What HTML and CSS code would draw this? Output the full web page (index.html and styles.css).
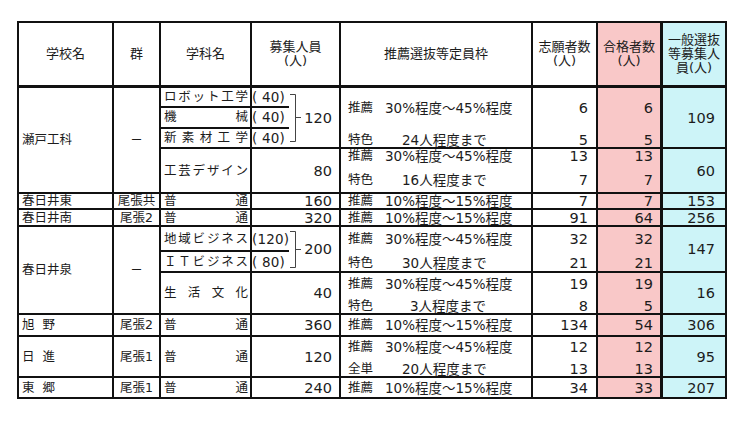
FILE: index.html
```html
<!DOCTYPE html>
<html lang="ja">
<head>
<meta charset="utf-8">
<title>推薦選抜等 合格者数</title>
<link rel="stylesheet" href="styles.css">
</head>
<body>
<div class="sheet">
  <div class="grid">
    <!-- header -->
    <div class="cell hd">学校名</div>
    <div class="cell hd">群</div>
    <div class="cell hd">学科名</div>
    <div class="cell hd">募集人員<br>(人)</div>
    <div class="cell hd">推薦選抜等定員枠</div>
    <div class="cell hd">志願者数<br>(人)</div>
    <div class="cell hd pink">合格者数<br>(人)</div>
    <div class="cell hd blue">一般選抜<br>等募集人<br>員(人)</div>

    <!-- 瀬戸工科 A -->
    <div class="cell school span2">瀬戸工科</div>
    <div class="cell grp span2">－</div>
    <div class="cell dept nopad">
      <div class="stack">
        <div class="sub ul"><span class="nm">ロボット工学</span></div>
        <div class="sub ul thick"><span class="nm">機械</span></div>
        <div class="sub"><span class="nm">新素材工学</span></div>
      </div>
    </div>
    <div class="cell capb">
      <div class="stack paren">
        <div class="sub ul">( 40)</div>
        <div class="sub ul thick">( 40)</div>
        <div class="sub">( 40)</div>
      </div>
      <svg class="brk" width="14" height="59" viewBox="0 0 14 59"><path d="M1 6.5H6.5V53.5H1M6.5 29.5H12" fill="none" stroke="#444" stroke-width="1"/></svg>
      <div class="tot">120</div>
    </div>
    <div class="cell sel two rA">
      <div class="ln"><span class="lb">推薦</span><span>30%程度～45%程度</span></div>
      <div class="ln"><span class="lb">特色</span><span class="t2">24人程度まで</span></div>
    </div>
    <div class="cell num two rA"><span>6</span><span>5</span></div>
    <div class="cell num two rA pink"><span>6</span><span>5</span></div>
    <div class="cell num blue gen">109</div>

    <!-- 瀬戸工科 B -->
    <div class="cell dept"><span class="nm">工芸デザイン</span></div>
    <div class="cell num cap">80</div>
    <div class="cell sel two rB">
      <div class="ln"><span class="lb">推薦</span><span>30%程度～45%程度</span></div>
      <div class="ln"><span class="lb">特色</span><span class="t2">16人程度まで</span></div>
    </div>
    <div class="cell num two rB"><span>13</span><span>7</span></div>
    <div class="cell num two rB pink"><span>13</span><span>7</span></div>
    <div class="cell num blue gen">60</div>

    <!-- 春日井東 -->
    <div class="cell school">春日井東</div>
    <div class="cell grp">尾張共</div>
    <div class="cell dept"><span class="nm">普通</span></div>
    <div class="cell num cap">160</div>
    <div class="cell sel"><div class="ln"><span class="lb">推薦</span><span>10%程度～15%程度</span></div></div>
    <div class="cell num">7</div>
    <div class="cell num pink">7</div>
    <div class="cell num blue gen">153</div>

    <!-- 春日井南 -->
    <div class="cell school">春日井南</div>
    <div class="cell grp">尾張2</div>
    <div class="cell dept"><span class="nm">普通</span></div>
    <div class="cell num cap">320</div>
    <div class="cell sel"><div class="ln"><span class="lb">推薦</span><span>10%程度～15%程度</span></div></div>
    <div class="cell num">91</div>
    <div class="cell num pink">64</div>
    <div class="cell num blue gen">256</div>

    <!-- 春日井泉 1 -->
    <div class="cell school span2">春日井泉</div>
    <div class="cell grp span2">－</div>
    <div class="cell dept nopad">
      <div class="stack">
        <div class="sub ul big"><span class="nm">地域ビジネス</span></div>
        <div class="sub"><span class="nm">ＩＴビジネス</span></div>
      </div>
    </div>
    <div class="cell capb">
      <div class="stack paren">
        <div class="sub ul big">(120)</div>
        <div class="sub">( 80)</div>
      </div>
      <svg class="brk" width="14" height="44" viewBox="0 0 14 44"><path d="M1 4.5H6.5V40.5H1M6.5 22.5H12" fill="none" stroke="#444" stroke-width="1"/></svg>
      <div class="tot">200</div>
    </div>
    <div class="cell sel two rC">
      <div class="ln"><span class="lb">推薦</span><span>30%程度～45%程度</span></div>
      <div class="ln"><span class="lb">特色</span><span class="t2">30人程度まで</span></div>
    </div>
    <div class="cell num two rC"><span>32</span><span>21</span></div>
    <div class="cell num two rC pink"><span>32</span><span>21</span></div>
    <div class="cell num blue gen">147</div>

    <!-- 春日井泉 2 -->
    <div class="cell dept"><span class="nm">生活文化</span></div>
    <div class="cell num cap">40</div>
    <div class="cell sel two rD">
      <div class="ln"><span class="lb">推薦</span><span>30%程度～45%程度</span></div>
      <div class="ln"><span class="lb">特色</span><span class="t3">3人程度まで</span></div>
    </div>
    <div class="cell num two rD"><span>19</span><span>8</span></div>
    <div class="cell num two rD pink"><span>19</span><span>5</span></div>
    <div class="cell num blue gen">16</div>

    <!-- 旭野 -->
    <div class="cell school sp">旭野</div>
    <div class="cell grp">尾張2</div>
    <div class="cell dept"><span class="nm">普通</span></div>
    <div class="cell num cap">360</div>
    <div class="cell sel"><div class="ln"><span class="lb">推薦</span><span>10%程度～15%程度</span></div></div>
    <div class="cell num">134</div>
    <div class="cell num pink">54</div>
    <div class="cell num blue gen">306</div>

    <!-- 日進 -->
    <div class="cell school sp">日進</div>
    <div class="cell grp">尾張1</div>
    <div class="cell dept"><span class="nm">普通</span></div>
    <div class="cell num cap">120</div>
    <div class="cell sel two rE">
      <div class="ln"><span class="lb">推薦</span><span>30%程度～45%程度</span></div>
      <div class="ln"><span class="lb">全単</span><span class="t2">20人程度まで</span></div>
    </div>
    <div class="cell num two rE"><span>12</span><span>13</span></div>
    <div class="cell num two rE pink"><span>12</span><span>13</span></div>
    <div class="cell num blue gen">95</div>

    <!-- 東郷 -->
    <div class="cell school sp">東郷</div>
    <div class="cell grp">尾張1</div>
    <div class="cell dept"><span class="nm">普通</span></div>
    <div class="cell num cap">240</div>
    <div class="cell sel"><div class="ln"><span class="lb">推薦</span><span>10%程度～15%程度</span></div></div>
    <div class="cell num">34</div>
    <div class="cell num pink">33</div>
    <div class="cell num blue gen">207</div>
  </div>
</div>
</body>
</html>
```

FILE: styles.css
```css
* { box-sizing: border-box; }

body {
  margin: 0;
  background: #ffffff;
  font-family: "DejaVu Sans", "Noto Sans CJK JP", sans-serif;
  color: #1c1c1c;
}

.sheet {
  padding: 21px 0 0 17px;
}

.grid {
  display: grid;
  width: 710px;
  grid-template-columns: 93px 45px 89px 87px 190px 63px 62px 63px;
  grid-template-rows: 63px 59px 43px 14px 15px 44px 40px 20px 39px 19px;
  gap: 2px;
  padding: 2px;
  background: #111111;
}

.cell {
  background: #ffffff;
  display: flex;
  align-items: center;
  font-size: 12.5px;
  line-height: 14px;
  min-width: 0;
  white-space: nowrap;
}

.span2 { grid-row: span 2; }

.hd {
  justify-content: center;
  text-align: center;
  font-size: 13px;
  line-height: 14px;
  border-bottom: 1px solid #111111;
  white-space: normal;
}

.pink { background: #f9c8c8; }
.blue { background: #cdf4f8; border-left: 1px solid #111111; }

.school { padding-left: 3px; }
.sp { letter-spacing: 8px; }

.grp { justify-content: center; }

.dept { padding: 0 2px 0 3px; }
.dept.nopad { padding: 0; align-items: stretch; }
.nm {
  flex: 1;
  text-align: justify;
  text-align-last: justify;
}

.stack {
  flex: 1;
  display: flex;
  flex-direction: column;
}
.stack .sub {
  flex: 1;
  display: flex;
  align-items: center;
  padding: 0 2px 0 3px;
}
.sub.ul { border-bottom: 2px solid #111111; }
.sub.ul.thick { border-bottom-width: 2.5px; }
.sub.big { flex: 1.25; }

.capb {
  align-items: stretch;
  font-size: 14.5px;
}
.stack.paren {
  flex: 0 0 37px;
}
.stack.paren .sub {
  padding: 0;
  font-size: 13.5px;
  letter-spacing: 0.2px;
  white-space: pre;
}
.brk { flex: 0 0 14px; display: block; }
.tot {
  flex: 1;
  display: flex;
  align-items: center;
  justify-content: flex-end;
  padding-right: 7px;
}

.sel {
  flex-direction: column;
  align-items: flex-start;
  justify-content: center;
  padding-left: 7px;
  font-size: 13.5px;
}
.ln { display: flex; }
.lb { width: 37px; font-size: 12.5px; }
.t2 { padding-left: 17px; }
.t3 { padding-left: 25px; }

.num {
  justify-content: flex-end;
  padding-right: 8px;
  font-size: 14.5px;
}
.num.cap { padding-right: 7px; }
.num.pink { padding-right: 7px; }
.num.gen { padding-right: 10px; }

.two {
  flex-direction: column;
  justify-content: space-between;
}
.num.two { align-items: flex-end; }

.rA { padding-top: 13px; padding-bottom: 0; }
.rB { padding-top: 0; padding-bottom: 5px; }
.rC { padding-top: 5px; padding-bottom: 1px; }
.rD { padding-top: 4px; padding-bottom: 0; }
.rE { padding-top: 3px; padding-bottom: 0; }
```
